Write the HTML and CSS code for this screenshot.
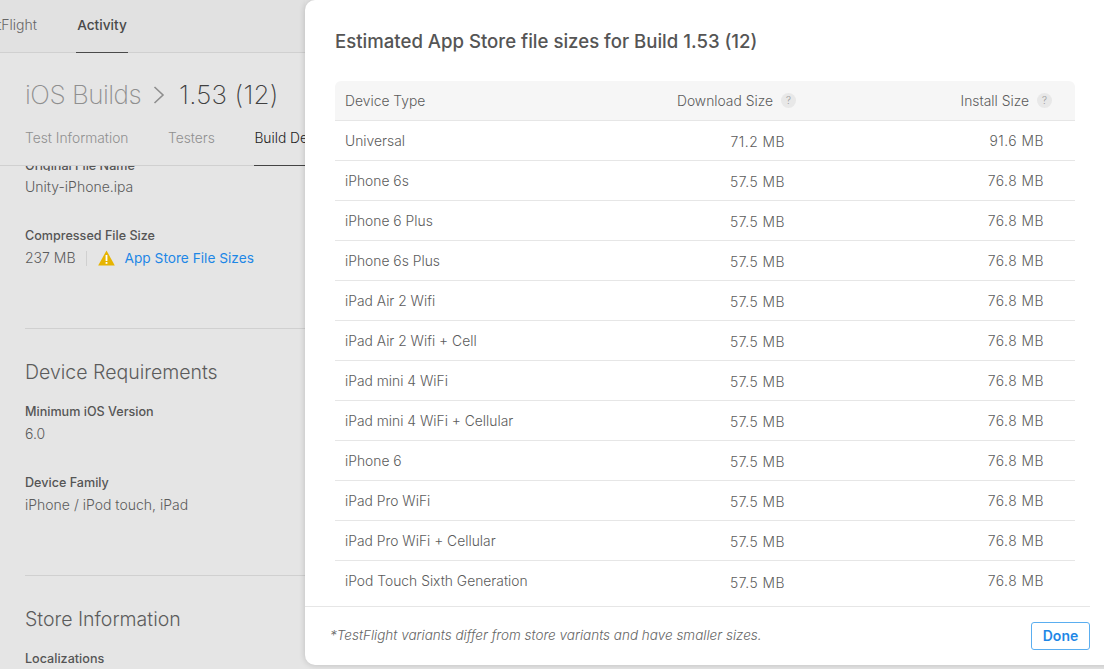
FILE: index.html
```html
<!DOCTYPE html>
<html lang="en">
<head>
<meta charset="utf-8">
<title>Estimated App Store file sizes</title>
<link rel="stylesheet" href="styles.css">
</head>
<body>
<div class="page">
  <nav class="topnav">
    <a class="toplink tf">TestFlight</a>
    <a class="toplink active">Activity</a>
  </nav>
  <header class="head">
    <h1 class="crumbs"><span class="crumb-muted">iOS Builds</span>
      <svg class="chev" width="12" height="20" viewBox="0 0 12 20"><path d="M1.5 2 L10 10 L1.5 18" fill="none" stroke="#8e8e8e" stroke-width="1.6"/></svg>
      <span class="crumb-current">1.53 (12)</span></h1>
    <div class="subtabs">
      <a class="subtab">Test Information</a>
      <a class="subtab">Testers</a>
      <a class="subtab current">Build Details</a>
    </div>
  </header>
  <main class="content">
    <div class="clip-field">
      <div class="label">Original File Name</div>
    </div>
    <div class="value first">Unity-iPhone.ipa</div>
    <div class="label gap-a">Compressed File Size</div>
    <div class="value size-row">
      <span>237 MB</span><span class="pipe"></span>
      <svg class="warn" width="17" height="16" viewBox="0 0 17 16"><path d="M8.5 0.5 L16.8 15.5 L0.2 15.5 Z" fill="#e6b400"/><rect x="7.6" y="5" width="1.8" height="6" fill="#fff"/><rect x="7.6" y="12" width="1.8" height="1.8" fill="#fff"/></svg>
      <a class="link">App Store File Sizes</a>
    </div>
    <hr class="rule r1">
    <h2 class="section">Device Requirements</h2>
    <div class="label">Minimum iOS Version</div>
    <div class="value">6.0</div>
    <div class="label gap-b">Device Family</div>
    <div class="value">iPhone / iPod touch, iPad</div>
    <hr class="rule r2">
    <h2 class="section">Store Information</h2>
    <div class="label">Localizations</div>
  </main>
</div>

<section class="modal">
  <h2 class="modal-title">Estimated App Store file sizes for Build 1.53 (12)</h2>
  <div class="table">
    <div class="row header">
      <div>Device Type</div>
      <div class="hcell dl">Download Size <span class="help">?</span></div>
      <div class="hcell inst">Install Size <span class="help">?</span></div>
    </div>
    <div class="row"><div>Universal</div><div class="num dl">71.2 MB</div><div class="num">91.6 MB</div></div>
    <div class="row"><div>iPhone 6s</div><div class="num dl">57.5 MB</div><div class="num">76.8 MB</div></div>
    <div class="row"><div>iPhone 6 Plus</div><div class="num dl">57.5 MB</div><div class="num">76.8 MB</div></div>
    <div class="row"><div>iPhone 6s Plus</div><div class="num dl">57.5 MB</div><div class="num">76.8 MB</div></div>
    <div class="row"><div>iPad Air 2 Wifi</div><div class="num dl">57.5 MB</div><div class="num">76.8 MB</div></div>
    <div class="row"><div>iPad Air 2 Wifi + Cell</div><div class="num dl">57.5 MB</div><div class="num">76.8 MB</div></div>
    <div class="row"><div>iPad mini 4 WiFi</div><div class="num dl">57.5 MB</div><div class="num">76.8 MB</div></div>
    <div class="row"><div>iPad mini 4 WiFi + Cellular</div><div class="num dl">57.5 MB</div><div class="num">76.8 MB</div></div>
    <div class="row"><div>iPhone 6</div><div class="num dl">57.5 MB</div><div class="num">76.8 MB</div></div>
    <div class="row"><div>iPad Pro WiFi</div><div class="num dl">57.5 MB</div><div class="num">76.8 MB</div></div>
    <div class="row"><div>iPad Pro WiFi + Cellular</div><div class="num dl">57.5 MB</div><div class="num">76.8 MB</div></div>
    <div class="row last"><div>iPod Touch Sixth Generation</div><div class="num dl">57.5 MB</div><div class="num">76.8 MB</div></div>
  </div>
  <footer class="modal-foot">
    <p class="note">*TestFlight variants differ from store variants and have smaller sizes.</p>
    <button class="done">Done</button>
  </footer>
</section>
</body>
</html>
```

FILE: styles.css
```css
* { box-sizing: border-box; }
html, body { margin: 0; height: 100%; overflow: hidden; }
body {
  background: #e5e5e5;
  font-family: Inter, "Liberation Sans", Arial, sans-serif;
  font-weight: 300;
  color: #5c5c5c;
  font-size: 14px;
  position: relative;
}
.page { width: 305px; height: 669px; overflow: hidden; }

.topnav {
  height: 53px;
  background: #e1e1e1;
  border-bottom: 1px solid #d0d0d0;
  display: flex;
  gap: 38px;
  margin-left: -26px;
  width: 331px;
}
.toplink { line-height: 50px; height: 53px; font-size: 14px; color: #666; }
.toplink.tf { width: 64px; white-space: nowrap; }
.toplink.active { font-weight: 500; font-size: 13.7px; color: #4a4a4a; border-bottom: 1px solid #4a4a4a; width: 52px; text-align: center; }

.head { padding: 26px 0 0 25px; height: 113px; border-bottom: 1px solid #d0d0d0; }
.crumbs { margin: 0; font-size: 26px; font-weight: 200; line-height: 32px; display: flex; align-items: center; white-space: nowrap; }
.crumb-muted { color: #8f8f8f; letter-spacing: -0.5px; }
.chev { margin: 0 14px 0 12px; }
.crumb-current { color: #404040; letter-spacing: 0.2px; }
.subtabs { display: flex; gap: 39.5px; margin-top: 15px; white-space: nowrap; height: 40px; }
.subtab { font-size: 13.8px; color: #909090; line-height: 24px; }
.subtab.current { color: #222; border-bottom: 1px solid #444; }

.content { padding-left: 25px; white-space: nowrap; }
.clip-field { height: 5px; overflow: hidden; }
.clip-field .label { margin-top: -9px; }
.label { font-size: 12.6px; font-weight: 500; color: #555; line-height: 17px; }
.value { font-size: 14px; color: #5c5c5c; line-height: 18px; margin-top: 5px; }
.value.first { margin-top: 7px; }
.gap-a { margin-top: 31px; }
.gap-b { margin-top: 31px; }
.size-row { display: flex; align-items: center; margin-top: 5px; }
.pipe { width: 1px; height: 15px; background: #d0d0d0; margin: 0 11px 0 10px; }
.warn { margin-right: 10px; }
.link { color: #1e87e6; font-size: 13.7px; font-weight: 400; }
.rule { border: 0; border-top: 1px solid #d0d0d0; margin: 0; }
.r1 { margin-top: 61px; }
.r2 { margin-top: 61px; }
.section { margin: 30px 0 18px; font-size: 19.5px; font-weight: 300; line-height: 26px; color: #5c5c5c; }

.modal {
  position: absolute;
  left: 305px;
  top: 0;
  width: 830px;
  height: 665px;
  background: #fff;
  border-radius: 10px;
  box-shadow: 0 0 6px rgba(0,0,0,.18);
  padding: 30px 30px 0;
}
.modal-title { margin: 0; font-size: 18.6px; font-weight: 500; color: #555; line-height: 23px; }
.table { margin-top: 28px; width: 740px; }
.row {
  display: grid;
  grid-template-columns: 300px 140px 259px;
  height: 40px;
  border-bottom: 1px solid #e6e6e6;
  padding-left: 10px;
  align-items: center;
  color: #5c5c5c;
  font-size: 13.85px;
  line-height: 16px;
}
.row > .num.dl { padding-top: 3px; }
.row.last { border-bottom: 0; }
.row.header { background: #f6f6f6; border-radius: 6px 6px 0 0; height: 40px; }
.num { text-align: right; letter-spacing: 0.5px; }
.hcell { display: flex; align-items: center; justify-content: flex-end; gap: 8px; white-space: nowrap; }
.hcell.dl { margin-right: -11px; }
.hcell.inst { margin-right: -8px; }
.help {
  width: 15px; height: 15px; border-radius: 50%;
  background: #e8e8e8; color: #999;
  font-size: 10px; line-height: 15px; text-align: center;
}
.modal-foot {
  margin: 5px 0 0 -30px;
  height: 59px;
  border-top: 1px solid #e6e6e6;
  display: flex;
  align-items: center;
  padding-left: 25px;
  width: 785px;
}
.note { margin: 0; font-style: italic; font-size: 13.5px; color: #666; flex: 1; padding-bottom: 2px; }
.done {
  width: 59px; height: 28px;
  background: #fff;
  border: 1px solid #5aaef0;
  border-radius: 3px;
  color: #1e87e6;
  font: 600 14px Inter, "Liberation Sans", Arial, sans-serif;
  padding: 0 0 2px;
}
```
